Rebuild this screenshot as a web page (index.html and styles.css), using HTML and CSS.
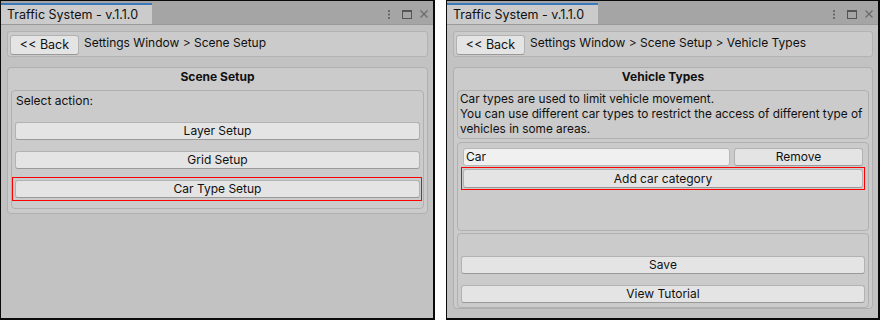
FILE: index.html
```html
<!DOCTYPE html>
<html>
<head>
<meta charset="utf-8">
<link rel="stylesheet" href="styles.css">
</head>
<body>
<div class="page">
  <div class="window">
    <div class="tabbar">
      <div class="tab">Traffic System - v.1.1.0</div>
      <div class="win-icons">
        <svg width="2" height="9" viewBox="0 0 2 9"><rect x="0" y="0" width="2" height="2" fill="#6b6b6b"/><rect x="0" y="3.5" width="2" height="2" fill="#6b6b6b"/><rect x="0" y="7" width="2" height="2" fill="#6b6b6b"/></svg>
        <svg class="ic-max" width="10" height="9" viewBox="0 0 10 9"><rect x="0.5" y="0.5" width="9" height="8" fill="none" stroke="#555" stroke-width="1"/><rect x="0" y="0" width="10" height="2" fill="#555"/></svg>
        <svg width="8" height="8" viewBox="0 0 8 8"><path d="M0.5 0.5L7.5 7.5M7.5 0.5L0.5 7.5" stroke="#6a6a6a" stroke-width="1.2"/></svg>
      </div>
    </div>
    <div class="content">
      <div class="crumbs">
        <button class="btn back">&lt;&lt; Back</button>
        <span class="path">Settings Window &gt; Scene Setup</span>
      </div>
      <div class="box main">
        <div class="title">Scene Setup</div>
        <div class="box inner">
          <div class="label">Select action:</div>
          <div class="btn-list">
            <button class="btn wide">Layer Setup</button>
            <button class="btn wide">Grid Setup</button>
            <div class="hl"><button class="btn wide">Car Type Setup</button></div>
          </div>
        </div>
      </div>
    </div>
  </div>

  <div class="window">
    <div class="tabbar">
      <div class="tab">Traffic System - v.1.1.0</div>
      <div class="win-icons">
        <svg width="2" height="9" viewBox="0 0 2 9"><rect x="0" y="0" width="2" height="2" fill="#6b6b6b"/><rect x="0" y="3.5" width="2" height="2" fill="#6b6b6b"/><rect x="0" y="7" width="2" height="2" fill="#6b6b6b"/></svg>
        <svg class="ic-max" width="10" height="9" viewBox="0 0 10 9"><rect x="0.5" y="0.5" width="9" height="8" fill="none" stroke="#555" stroke-width="1"/><rect x="0" y="0" width="10" height="2" fill="#555"/></svg>
        <svg width="8" height="8" viewBox="0 0 8 8"><path d="M0.5 0.5L7.5 7.5M7.5 0.5L0.5 7.5" stroke="#6a6a6a" stroke-width="1.2"/></svg>
      </div>
    </div>
    <div class="content">
      <div class="crumbs">
        <button class="btn back">&lt;&lt; Back</button>
        <span class="path">Settings Window &gt; Scene Setup &gt; Vehicle Types</span>
      </div>
      <div class="box main tall">
        <div class="title">Vehicle Types</div>
        <div class="box desc">Car types are used to limit vehicle movement.<br>You can use different car types to restrict the access of different type of vehicles in some areas.</div>
        <div class="box list">
          <div class="row">
            <div class="field">Car</div>
            <button class="btn remove">Remove</button>
          </div>
          <div class="hl hl-add"><button class="btn wide">Add car category</button></div>
        </div>
        <div class="box actions">
          <button class="btn wide">Save</button>
          <button class="btn wide">View Tutorial</button>
        </div>
      </div>
    </div>
  </div>
</div>
</body>
</html>
```

FILE: styles.css
```css
* { box-sizing: border-box; }
html, body { margin: 0; padding: 0; background: #ffffff; }
body {
  font-family: Inter, "Noto Sans", sans-serif;
  font-size: 12px;
  color: #101010;
}
.page {
  display: flex;
  gap: 11px;
  width: 880px;
  height: 320px;
}
.window {
  width: 435px;
  height: 320px;
  border: 1px solid #0a0a0a;
  border-width: 1px 2px 2px 1px;
  background: #c2c2c2;
  display: flex;
  flex-direction: column;
}
.window + .window { width: 434px; }
.tabbar {
  height: 24px;
  background: #a5a5a5;
  display: flex;
  align-items: flex-end;
  justify-content: space-between;
  border-bottom: 1px solid #999;
}
.tab {
  width: 151px;
  height: 21px;
  background: #cbcbcb;
  border-top: 2px solid #3a79bb;
  padding: 1px 0 0 6px;
  font-size: 12.5px;
  line-height: 17px;
  color: #101010;
}
.win-icons {
  display: flex;
  align-items: center;
  gap: 8px;
  padding: 3px 5px 0 0;
  align-self: center;
}
.win-icons svg { display: block; }
.ic-max { margin-left: 4px; }
.content {
  padding: 6px 5px 0 6px;
  display: flex;
  flex-direction: column;
  gap: 10px;
  flex: 1;
}
.crumbs {
  height: 26px;
  background: #cbcbcb;
  border: 1px solid #b3b3b3;
  border-radius: 3px;
  display: flex;
  align-items: center;
  padding: 0 2px;
  gap: 5px;
}
.btn {
  font-family: inherit;
  font-size: 12px;
  color: #101010;
  background: #e4e4e4;
  border: 1px solid #b2b2b2;
  border-bottom-color: #999;
  border-radius: 3px;
  padding: 0;
  margin: 0;
  height: 18px;
  line-height: 16px;
  outline: none;
}
.back {
  width: 69px;
  height: 20px;
  margin-top: 2px;
  font-size: 12.5px;
}
.path { font-size: 12px; margin-bottom: 3px; }
.box {
  background: #cbcbcb;
  border: 1px solid #b0b0b0;
  border-radius: 4px;
}
.main {
  padding: 0 3px 4px 3px;
}
.title {
  text-align: center;
  font-weight: 700;
  height: 22px;
  line-height: 18px;
}
.inner {
  padding: 1px 3px 8px 3px;
}
.label { height: 20px; line-height: 18px; padding-left: 1px; }
.btn-list {
  display: flex;
  flex-direction: column;
  gap: 11px;
  padding-top: 10px;
}
.btn.wide { width: 100%; display: block; }
.hl {
  outline: 1px solid #ff0000;
  outline-offset: 0;
  padding: 2px 1px 2px 2px;
  margin: -2px -1px 0 -2px;
}
.tall {
  flex: 1;
  margin-bottom: 9px;
  padding-bottom: 0;
  display: flex;
  flex-direction: column;
}
.desc {
  padding: 1px 2px 1px 2px;
  line-height: 15px;
  font-size: 11.8px;
}
.list {
  margin-top: 3px;
  height: 89px;
  padding: 5px 3px 4px 3px;
}
.row { display: flex; gap: 4px; margin: 0 2px; }
.field {
  flex: 1;
  height: 18px;
  background: #f0f0f0;
  border: 1px solid #b8b8b8;
  border-radius: 3px;
  padding-left: 2px;
  line-height: 16px;
}
.remove { width: 129px; }
.hl.hl-add {
  margin: 2px 1px 0 1px;
  padding: 1px;
}
.hl-add .btn { height: 19px; }
.actions {
  margin-top: 2px;
  flex: 1;
  display: flex;
  flex-direction: column;
  justify-content: flex-end;
  gap: 11px;
  padding: 0 3px 4px 3px;
}
```
